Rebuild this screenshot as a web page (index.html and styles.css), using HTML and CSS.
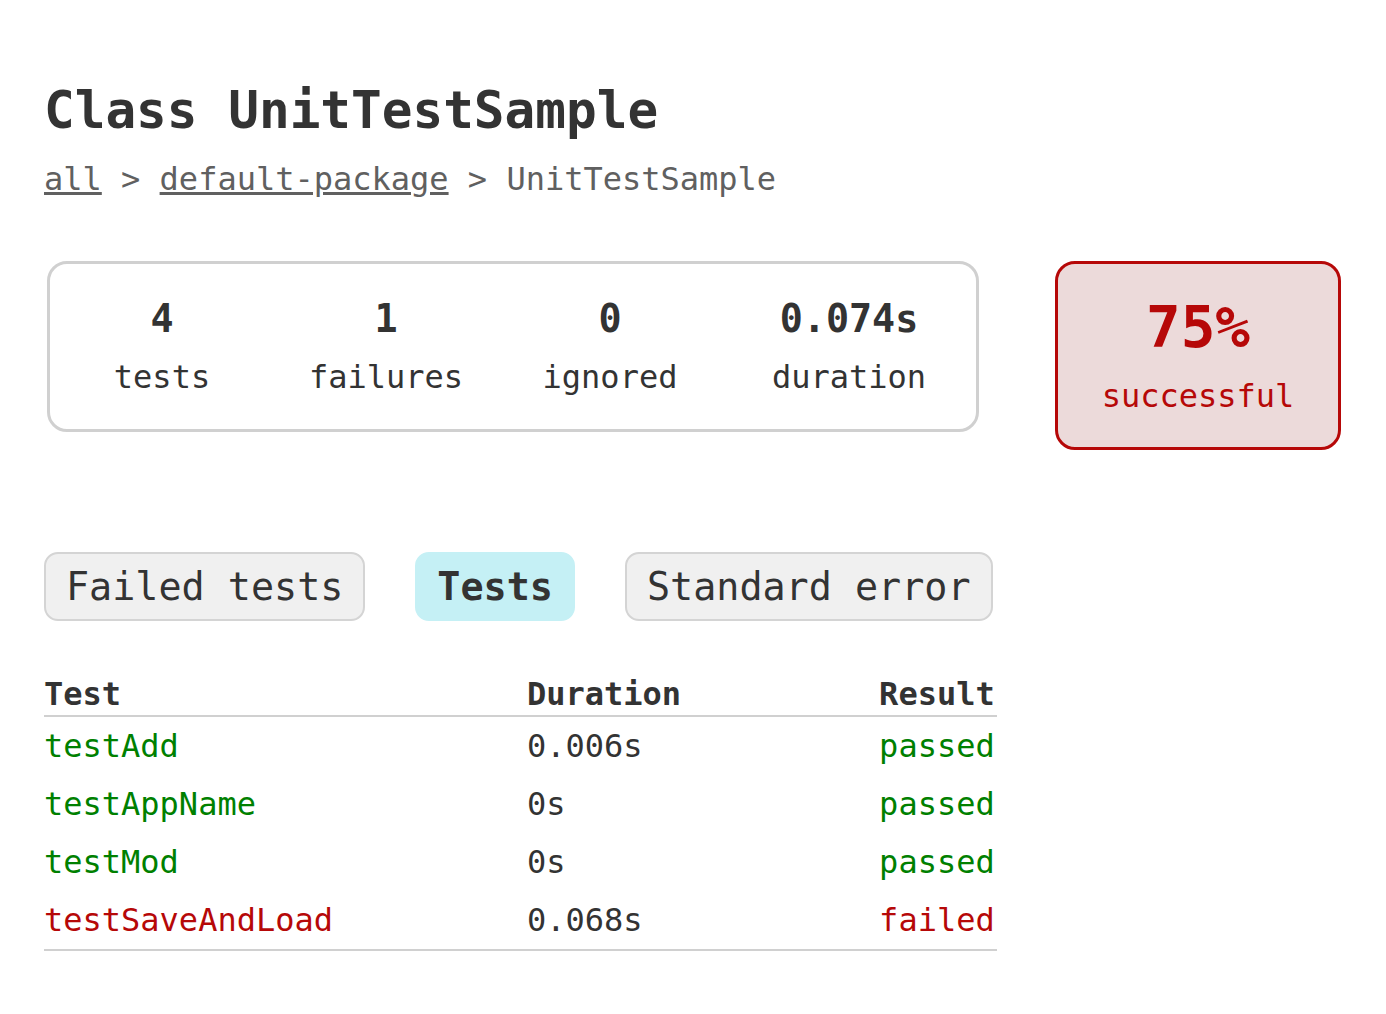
FILE: index.html
```html
<!DOCTYPE html>
<html lang="en">
<head>
<meta charset="utf-8">
<title>Test results - Class UnitTestSample</title>
<link rel="stylesheet" href="styles.css">
</head>
<body>
<div class="content">
  <h1 class="title">Class UnitTestSample</h1>
  <div class="breadcrumbs"><a href="#">all</a> &gt; <a href="#">default-package</a> &gt; UnitTestSample</div>

  <div class="summary">
    <div class="summary-group">
      <div class="info-box">
        <div class="counter">4</div>
        <p class="label">tests</p>
      </div>
      <div class="info-box">
        <div class="counter">1</div>
        <p class="label">failures</p>
      </div>
      <div class="info-box">
        <div class="counter">0</div>
        <p class="label">ignored</p>
      </div>
      <div class="info-box info-box-wide">
        <div class="counter">0.074s</div>
        <p class="label">duration</p>
      </div>
    </div>
    <div class="success-rate failures">
      <div class="percent">75%</div>
      <p class="label">successful</p>
    </div>
  </div>

  <ul class="tab-links">
    <li class="tab"><a href="#">Failed tests</a></li>
    <li class="tab selected"><a href="#">Tests</a></li>
    <li class="tab"><a href="#">Standard error</a></li>
  </ul>

  <table class="results">
    <thead>
      <tr>
        <th>Test</th>
        <th>Duration</th>
        <th class="numeric">Result</th>
      </tr>
    </thead>
    <tbody>
      <tr>
        <td class="success">testAdd</td>
        <td>0.006s</td>
        <td class="numeric success">passed</td>
      </tr>
      <tr>
        <td class="success">testAppName</td>
        <td>0s</td>
        <td class="numeric success">passed</td>
      </tr>
      <tr>
        <td class="success">testMod</td>
        <td>0s</td>
        <td class="numeric success">passed</td>
      </tr>
      <tr>
        <td class="failures">testSaveAndLoad</td>
        <td>0.068s</td>
        <td class="numeric failures">failed</td>
      </tr>
    </tbody>
  </table>
</div>
</body>
</html>
```

FILE: styles.css
```css
html, body {
  margin: 0;
  padding: 0;
  background: #ffffff;
}

body {
  font-family: "DejaVu Sans Mono", "Liberation Mono", monospace;
  font-size: 32px;
  color: #333333;
}

.content {
  padding: 81px 44px 40px 44px;
}

.title {
  margin: 0;
  font-size: 51px;
  font-weight: bold;
  line-height: normal;
  color: #333333;
}

.breadcrumbs {
  margin-top: 20px;
  color: #606060;
}

.breadcrumbs a {
  color: #606060;
  text-decoration: underline;
}

.summary {
  display: flex;
  align-items: flex-start;
  gap: 76px;
  margin-top: 63px;
}

.summary-group {
  display: flex;
  margin-left: 3px;
  border: 3px solid #d0d0d0;
  border-radius: 20px;
}

.info-box {
  width: 224px;
  padding: 32px 0 33px 0;
  text-align: center;
}

.info-box-wide {
  width: 254px;
}

.counter {
  font-size: 38.4px;
  font-weight: bold;
}

.label {
  margin: 17px 0 0 0;
}

.success-rate {
  width: 280px;
  padding: 30px 0 32px 0;
  border: 3px solid #b60808;
  border-radius: 20px;
  background: #ecdada;
  text-align: center;
  color: #b60808;
}

.percent {
  font-size: 57.6px;
  font-weight: bold;
}

.success-rate .label {
  margin-top: 16px;
}

.tab-links {
  display: flex;
  gap: 50px;
  list-style: none;
  margin: 102px 0 0 0;
  padding: 0;
}

.tab {
  padding: 10px 20px;
  border: 2px solid #d4d4d4;
  border-radius: 14px;
  background: #f0f0f0;
}

.tab a {
  display: block;
  font-size: 38.4px;
  color: #333333;
  text-decoration: none;
}

.tab.selected {
  background: #c5f0f5;
  border-color: #c5f0f5;
}

.tab.selected a {
  font-weight: bold;
}

.results {
  margin-top: 54px;
  border-collapse: collapse;
  border-bottom: 2px solid #d0d0d0;
}

.results th {
  text-align: left;
  white-space: nowrap;
  font-weight: bold;
  padding: 0 2px 2px 192px;
  border-bottom: 2px solid #d0d0d0;
}

.results td {
  white-space: nowrap;
  padding: 10px 2px 10px 192px;
}

.results th:first-child,
.results td:first-child {
  padding-left: 0;
}

.results th.numeric,
.results td.numeric {
  text-align: right;
  padding-left: 196px;
}

.success {
  color: #008000;
}

.failures {
  color: #b60808;
}
```
